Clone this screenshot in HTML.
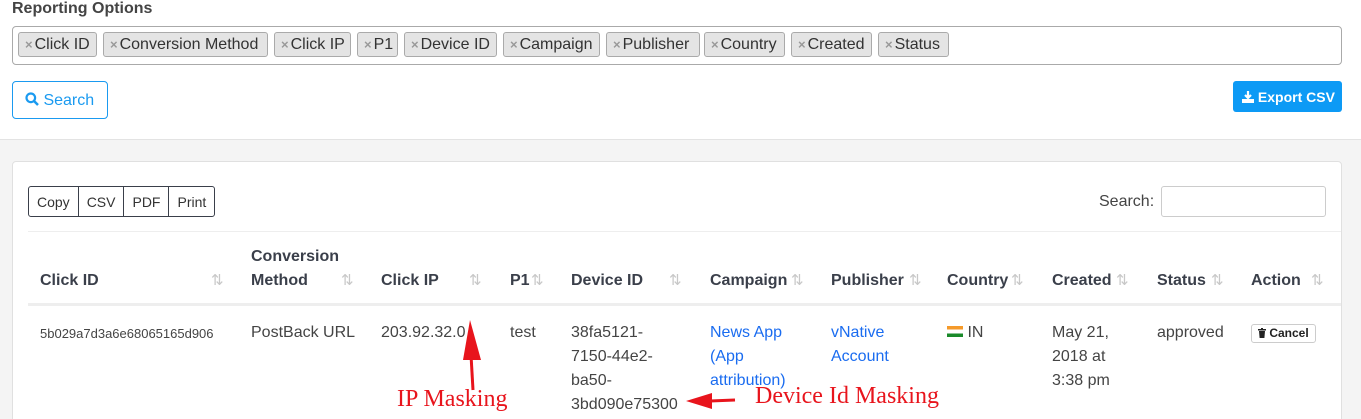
<!DOCTYPE html>
<html><head><meta charset="utf-8"><style>
*{box-sizing:border-box;margin:0;padding:0}
html,body{width:1361px;height:419px;overflow:hidden}
body{background:#fff;font-family:"Liberation Sans",sans-serif;color:#333;position:relative}
.a{position:absolute;white-space:nowrap}
.gray{position:absolute;left:0;top:139px;width:1361px;height:280px;background:#f4f4f4;border-top:1px solid #e3e3e3}
.card{position:absolute;left:12px;top:161px;width:1330px;height:270px;background:#fff;border:1px solid #e0e0e0;border-radius:4px}
.tag{position:absolute;top:32px;height:25px;background:#e4e4e4;border:1px solid #aaa;border-radius:3px;font-size:16px;line-height:24px;padding-left:6px;color:#333}
.tag b{color:#999;font-size:13px;font-weight:bold;margin-right:2px}
.th{position:absolute;font-weight:bold;font-size:16px;color:#3a3f4a}
.so{position:absolute;color:#c8c8c8;font-size:15px;top:271px}
.td{position:absolute;font-size:16px;color:#444;line-height:24px;top:321px}
.bl{color:#1a6cf0}
.red{position:absolute;color:#e8141c;font-family:"Liberation Serif","DejaVu Serif",serif;font-size:24px}
</style></head><body>
<div class="a" style="left:12px;top:0;font-size:16px;font-weight:bold;color:#444">Reporting Options</div>
<div class="a" style="left:12px;top:26px;width:1330px;height:39px;border:1px solid #aaa;border-radius:4px"></div>
<div class="tag" style="left:18px;width:79px"><b>×</b>Click ID</div>
<div class="tag" style="left:103px;width:165px"><b>×</b>Conversion Method</div>
<div class="tag" style="left:274px;width:77px"><b>×</b>Click IP</div>
<div class="tag" style="left:357px;width:41px"><b>×</b>P1</div>
<div class="tag" style="left:404px;width:93px"><b>×</b>Device ID</div>
<div class="tag" style="left:503px;width:97px"><b>×</b>Campaign</div>
<div class="tag" style="left:606px;width:94px"><b>×</b>Publisher</div>
<div class="tag" style="left:704px;width:81px"><b>×</b>Country</div>
<div class="tag" style="left:791px;width:81px"><b>×</b>Created</div>
<div class="tag" style="left:878px;width:71px"><b>×</b>Status</div>
<div class="a" style="left:12px;top:81px;width:96px;height:38px;border:1px solid #1a9af0;border-radius:4px;color:#1a9af0;font-size:16px;line-height:38px;padding-left:12px">
<svg width="14" height="14" viewBox="0 0 14 14" style="vertical-align:-1px"><circle cx="5.8" cy="5.8" r="4.3" fill="none" stroke="#1a9af0" stroke-width="2.2"/><path d="M9 9l4 4" stroke="#1a9af0" stroke-width="2.5"/></svg> Search</div>
<div class="a" style="left:1233px;top:81px;width:109px;height:31px;background:#0d9af5;border-radius:3px;color:#fff;font-size:14px;font-weight:bold;line-height:32px;padding-left:9px">
<svg width="12" height="12" viewBox="0 0 12 12" style="vertical-align:-1px"><path d="M6 0v6M3 4l3 3 3-3" stroke="#fff" stroke-width="2.2" fill="none"/><rect x="0" y="8" width="12" height="4" fill="#fff"/></svg> Export CSV</div>
<div class="gray"></div>
<div class="card"></div>
<div class="a" style="left:28px;top:186px;height:31px;border:1px solid #3a3f4a;border-radius:3px;display:flex;font-size:14px;line-height:30px;color:#333">
<span style="padding:0 8px;border-right:1px solid #3a3f4a">Copy</span><span style="padding:0 8px;border-right:1px solid #3a3f4a">CSV</span><span style="padding:0 8px;border-right:1px solid #3a3f4a">PDF</span><span style="padding:0 8px">Print</span></div>
<div class="a" style="left:1099px;top:193px;font-size:16px;color:#444">Search:</div>
<div class="a" style="left:1161px;top:186px;width:165px;height:31px;border:1px solid #ccc;border-radius:3px"></div>
<div class="a" style="left:28px;top:231px;width:1313px;height:1px;background:#eee"></div>
<div class="a" style="left:28px;top:303px;width:1313px;height:3px;background:#eee"></div>
<div class="th" style="left:251px;top:248px">Conversion</div>
<div class="th" style="left:40px;top:272px">Click ID</div>
<div class="th" style="left:251px;top:272px">Method</div>
<div class="th" style="left:381px;top:272px">Click IP</div>
<div class="th" style="left:510px;top:272px">P1</div>
<div class="th" style="left:571px;top:272px">Device ID</div>
<div class="th" style="left:710px;top:272px">Campaign</div>
<div class="th" style="left:831px;top:272px">Publisher</div>
<div class="th" style="left:947px;top:272px">Country</div>
<div class="th" style="left:1052px;top:272px">Created</div>
<div class="th" style="left:1157px;top:272px">Status</div>
<div class="th" style="left:1251px;top:272px">Action</div>
<div class="so" style="left:211px">⇅</div><div class="so" style="left:341px">⇅</div><div class="so" style="left:469px">⇅</div><div class="so" style="left:531px">⇅</div><div class="so" style="left:669px">⇅</div><div class="so" style="left:791px">⇅</div><div class="so" style="left:909px">⇅</div><div class="so" style="left:1011px">⇅</div><div class="so" style="left:1116px">⇅</div><div class="so" style="left:1211px">⇅</div><div class="so" style="left:1311px">⇅</div>
<div class="td" style="left:40px;font-size:13px;top:322px">5b029a7d3a6e68065165d906</div>
<div class="td" style="left:251px">PostBack URL</div>
<div class="td" style="left:381px">203.92.32.0</div>
<div class="td" style="left:510px">test</div>
<div class="td" style="left:571px">38fa5121-<br>7150-44e2-<br>ba50-<br>3bd090e75300</div>
<div class="td bl" style="left:710px">News App<br>(App<br>attribution)</div>
<div class="td bl" style="left:831px">vNative<br>Account</div>
<div class="td" style="left:947px"><span style="display:inline-block;width:16px;height:11px;vertical-align:0;background:linear-gradient(#f59a2a 33%,#fff 33% 66%,#1a8a2a 66%)"></span> IN</div>
<div class="td" style="left:1052px">May 21,<br>2018 at<br>3:38 pm</div>
<div class="td" style="left:1157px">approved</div>
<div class="a" style="left:1251px;top:324px;width:65px;height:19px;border:1px solid #ccc;border-radius:3px;font-size:12px;font-weight:bold;line-height:17px;padding-left:6px;color:#222"><svg width="8" height="10" viewBox="0 0 8 10" style="vertical-align:-1px"><rect x="0" y="1" width="8" height="1.5" fill="#222"/><rect x="3" y="0" width="2" height="1.5" fill="#222"/><path d="M1 3h6l-.6 7H1.6Z" fill="#222"/></svg> Cancel</div>
<svg class="a" style="left:0;top:0" width="1361" height="419"><path d="M473 390L471 355" stroke="#e8141c" stroke-width="3"/><path d="M463 360L470 320L481 360Z" fill="#e8141c"/><path d="M735 400L710 401" stroke="#e8141c" stroke-width="3"/><path d="M712 393L686 401L712 409Z" fill="#e8141c"/></svg>
<div class="red" style="left:397px;top:386px">IP Masking</div>
<div class="red" style="left:755px;top:383px">Device Id Masking</div>
</body></html>
